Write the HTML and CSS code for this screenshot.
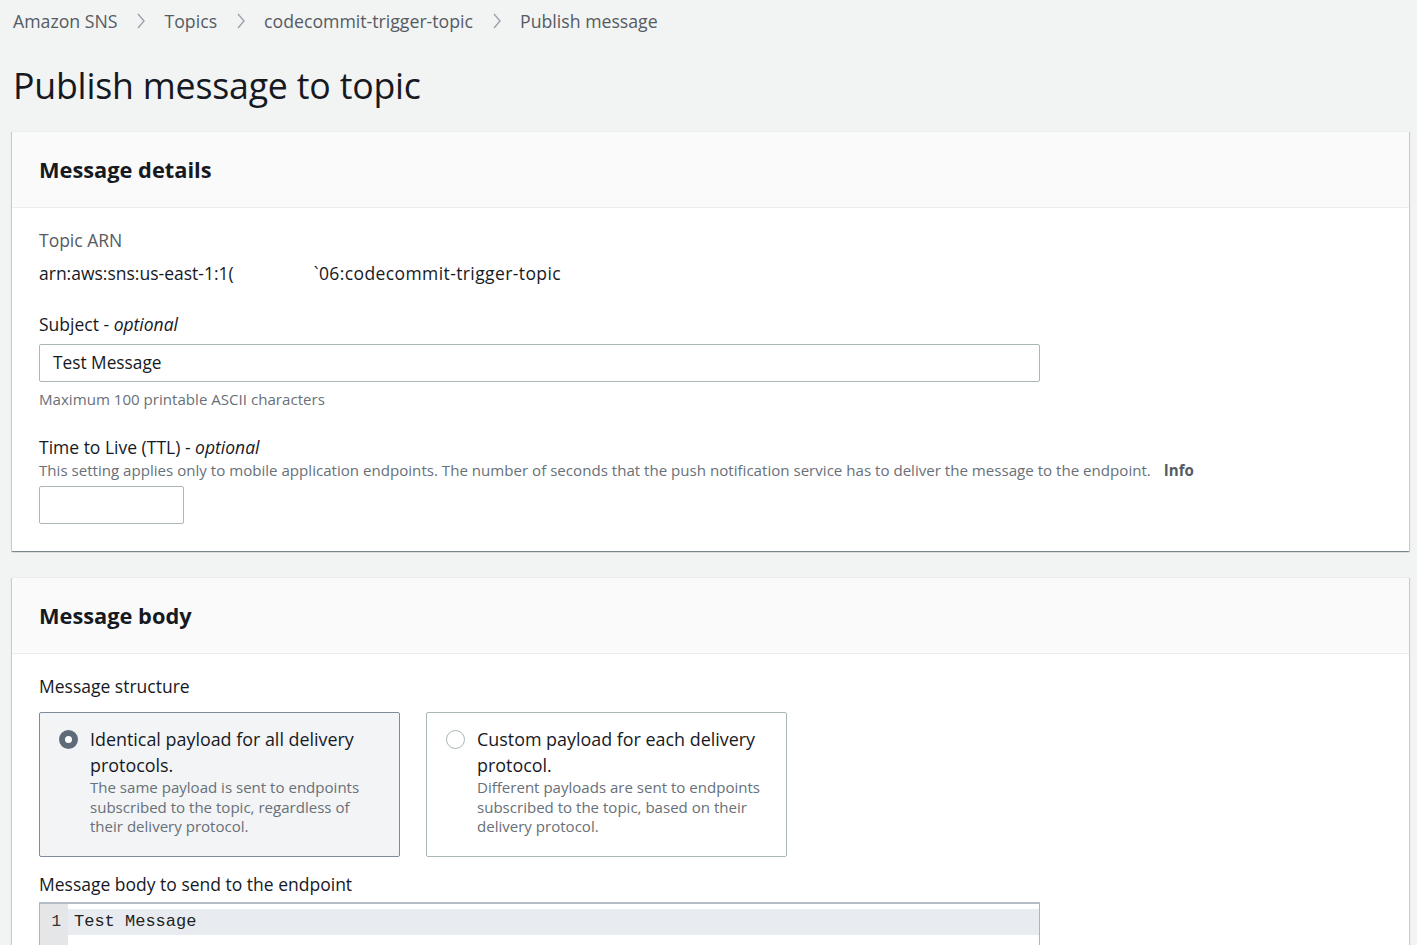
FILE: index.html
```html
<!DOCTYPE html>
<html lang="en">
<head>
<meta charset="utf-8">
<title>Publish message to topic</title>
<link rel="stylesheet" href="styles.css">
</head>
<body>
<div class="page">
  <nav class="breadcrumb">
    <span class="crumb">Amazon SNS</span>
    <svg class="chev" viewBox="0 0 10 18" width="10" height="18"><path d="M2 2 L8 9 L2 16" fill="none" stroke="#9aa3ad" stroke-width="1.4"/></svg>
    <span class="crumb">Topics</span>
    <svg class="chev" viewBox="0 0 10 18" width="10" height="18"><path d="M2 2 L8 9 L2 16" fill="none" stroke="#9aa3ad" stroke-width="1.4"/></svg>
    <span class="crumb">codecommit-trigger-topic</span>
    <svg class="chev" viewBox="0 0 10 18" width="10" height="18"><path d="M2 2 L8 9 L2 16" fill="none" stroke="#9aa3ad" stroke-width="1.4"/></svg>
    <span class="crumb current">Publish message</span>
  </nav>
  <h1 class="title">Publish message to topic</h1>

  <section class="panel">
    <header class="panel-head"><h2>Message details</h2></header>
    <div class="panel-body">
      <div class="label muted">Topic ARN</div>
      <div class="value">arn:aws:sns:us-east-1:1(<span class="redact"></span><span class="arn-tail">`06:codecommit-trigger-topic</span></div>

      <div class="label gap-l">Subject - <em>optional</em></div>
      <div class="input wide">Test Message</div>
      <div class="help">Maximum 100 printable ASCII characters</div>

      <div class="label gap-ttl">Time to Live (TTL) - <em>optional</em></div>
      <div class="desc">This setting applies only to mobile application endpoints. The number of seconds that the push notification service has to deliver the message to the endpoint.<span class="info">Info</span></div>
      <div class="input small"></div>
    </div>
  </section>

  <section class="panel panel2">
    <header class="panel-head"><h2>Message body</h2></header>
    <div class="panel-body">
      <div class="label">Message structure</div>
      <div class="tiles">
        <div class="tile selected">
          <span class="radio on"></span>
          <div class="tile-text">
            <div class="tile-title">Identical payload for all delivery protocols.</div>
            <div class="tile-desc">The same payload is sent to endpoints subscribed to the topic, regardless of their delivery protocol.</div>
          </div>
        </div>
        <div class="tile">
          <span class="radio"></span>
          <div class="tile-text">
            <div class="tile-title">Custom payload for each delivery protocol.</div>
            <div class="tile-desc">Different payloads are sent to endpoints subscribed to the topic, based on their delivery protocol.</div>
          </div>
        </div>
      </div>
      <div class="label gap-body">Message body to send to the endpoint</div>
      <div class="editor">
        <div class="gutter"><span>1</span></div>
        <div class="lines"><div class="line active">Test Message</div></div>
      </div>
    </div>
  </section>
</div>
</body>
</html>
```

FILE: styles.css
```css
* { box-sizing: border-box; }
html, body { margin: 0; padding: 0; }
body {
  background: #f2f3f3;
  font-family: "Open Sans", "Noto Sans", sans-serif;
  color: #16191f;
  overflow: hidden;
  height: 945px;
}
.page { padding: 0 8px 0 12px; }

.breadcrumb {
  height: 42px;
  display: flex;
  align-items: center;
  font-size: 17.7px;
  color: #545b64;
  padding-left: 1px;
}
.crumb { white-space: nowrap; }
.chev { margin: 0 18px 0 19px; }

.title {
  margin: 21px 0 0 1px;
  font-size: 35.7px;
  line-height: 44px;
  font-weight: 400;
  color: #16191f;
  letter-spacing: -0.2px;
}

.panel {
  margin-top: 24px;
  background: #fff;
  box-shadow: 0 1px 1px 0 rgba(0,28,36,.35), 1px 1px 1px 0 rgba(0,28,36,.12), -1px 1px 1px 0 rgba(0,28,36,.12);
  border-top: 1px solid #eaeded;
}
.panel2 { margin-top: 26px; }
.panel-head {
  height: 76px;
  background: #fafafa;
  border-bottom: 1px solid #eaeded;
  display: flex;
  align-items: center;
  padding-left: 27px;
}
.panel-head h2 {
  margin: 0;
  font-size: 21.8px;
  font-weight: 700;
  color: #16191f;
}
.panel-body { padding: 20px 27px 27px 27px; }

.label { font-size: 17.5px; line-height: 24px; color: #16191f; }
.label em { font-style: italic; }
.muted { color: #545b64; }
.value { margin-top: 9px; font-size: 17.5px; line-height: 24px; color: #16191f; }
.redact { display: inline-block; width: 80px; }
.arn-tail { letter-spacing: 0.4px; }
.gap-l { margin-top: 27px; }
.input {
  margin-top: 8px;
  height: 38px;
  border: 1px solid #aab7b8;
  border-radius: 2px;
  background: #fff;
  font-size: 17.3px;
  line-height: 36px;
  padding-left: 13px;
  color: #16191f;
}
.input.wide { width: 1001px; }
.input.small { width: 145px; margin-top: 6px; }
.help { margin-top: 7px; font-size: 15.1px; line-height: 20px; color: #687078; }
.gap-ttl { margin-top: 26px; }
.desc { margin-top: 1px; font-size: 15.1px; line-height: 20px; color: #687078; white-space: nowrap; }
.info { font-weight: 700; color: #545b64; margin-left: 13px; }

.tiles { margin-top: 14px; display: flex; gap: 26px; }
.tile {
  width: 361px;
  height: 145px;
  border: 1px solid #aab7b8;
  border-radius: 2px;
  background: #fff;
  display: flex;
  padding: 13px 17px 0 19px;
  gap: 12px;
}
.tile.selected { background: #f2f4f6; border-color: #7f8c9b; }
.radio {
  flex: none;
  width: 19px; height: 19px;
  margin-top: 4px;
  border-radius: 50%;
  border: 1.5px solid #aab7b8;
  background: #fff;
}
.radio.on { border: 6px solid #5f6b78; background: #fff; }
.tile-title { font-size: 17.9px; line-height: 26px; color: #16191f; }
.tile-desc { font-size: 15.05px; line-height: 19.5px; color: #687078; }

.gap-body { margin-top: 15px; }
.editor {
  margin-top: 6px;
  width: 1001px;
  height: 60px;
  border: 1px solid #aab7b8;
  border-top: 2px solid #b5bec7;
  display: flex;
  background: #fff;
}
.gutter {
  width: 28px;
  background: #e4e6e8;
  padding-top: 5px;
  font-family: "Liberation Mono", monospace;
  font-size: 16px;
  text-align: right;
  padding-right: 7px;
  color: #333;
  line-height: 26px;
}
.lines { flex: 1; padding-top: 5px; }
.line {
  height: 26px;
  line-height: 26px;
  font-family: "Liberation Mono", monospace;
  font-size: 17px;
  color: #222;
  padding-left: 6px;
}
.line.active { background: #e8ecf1; }
```
